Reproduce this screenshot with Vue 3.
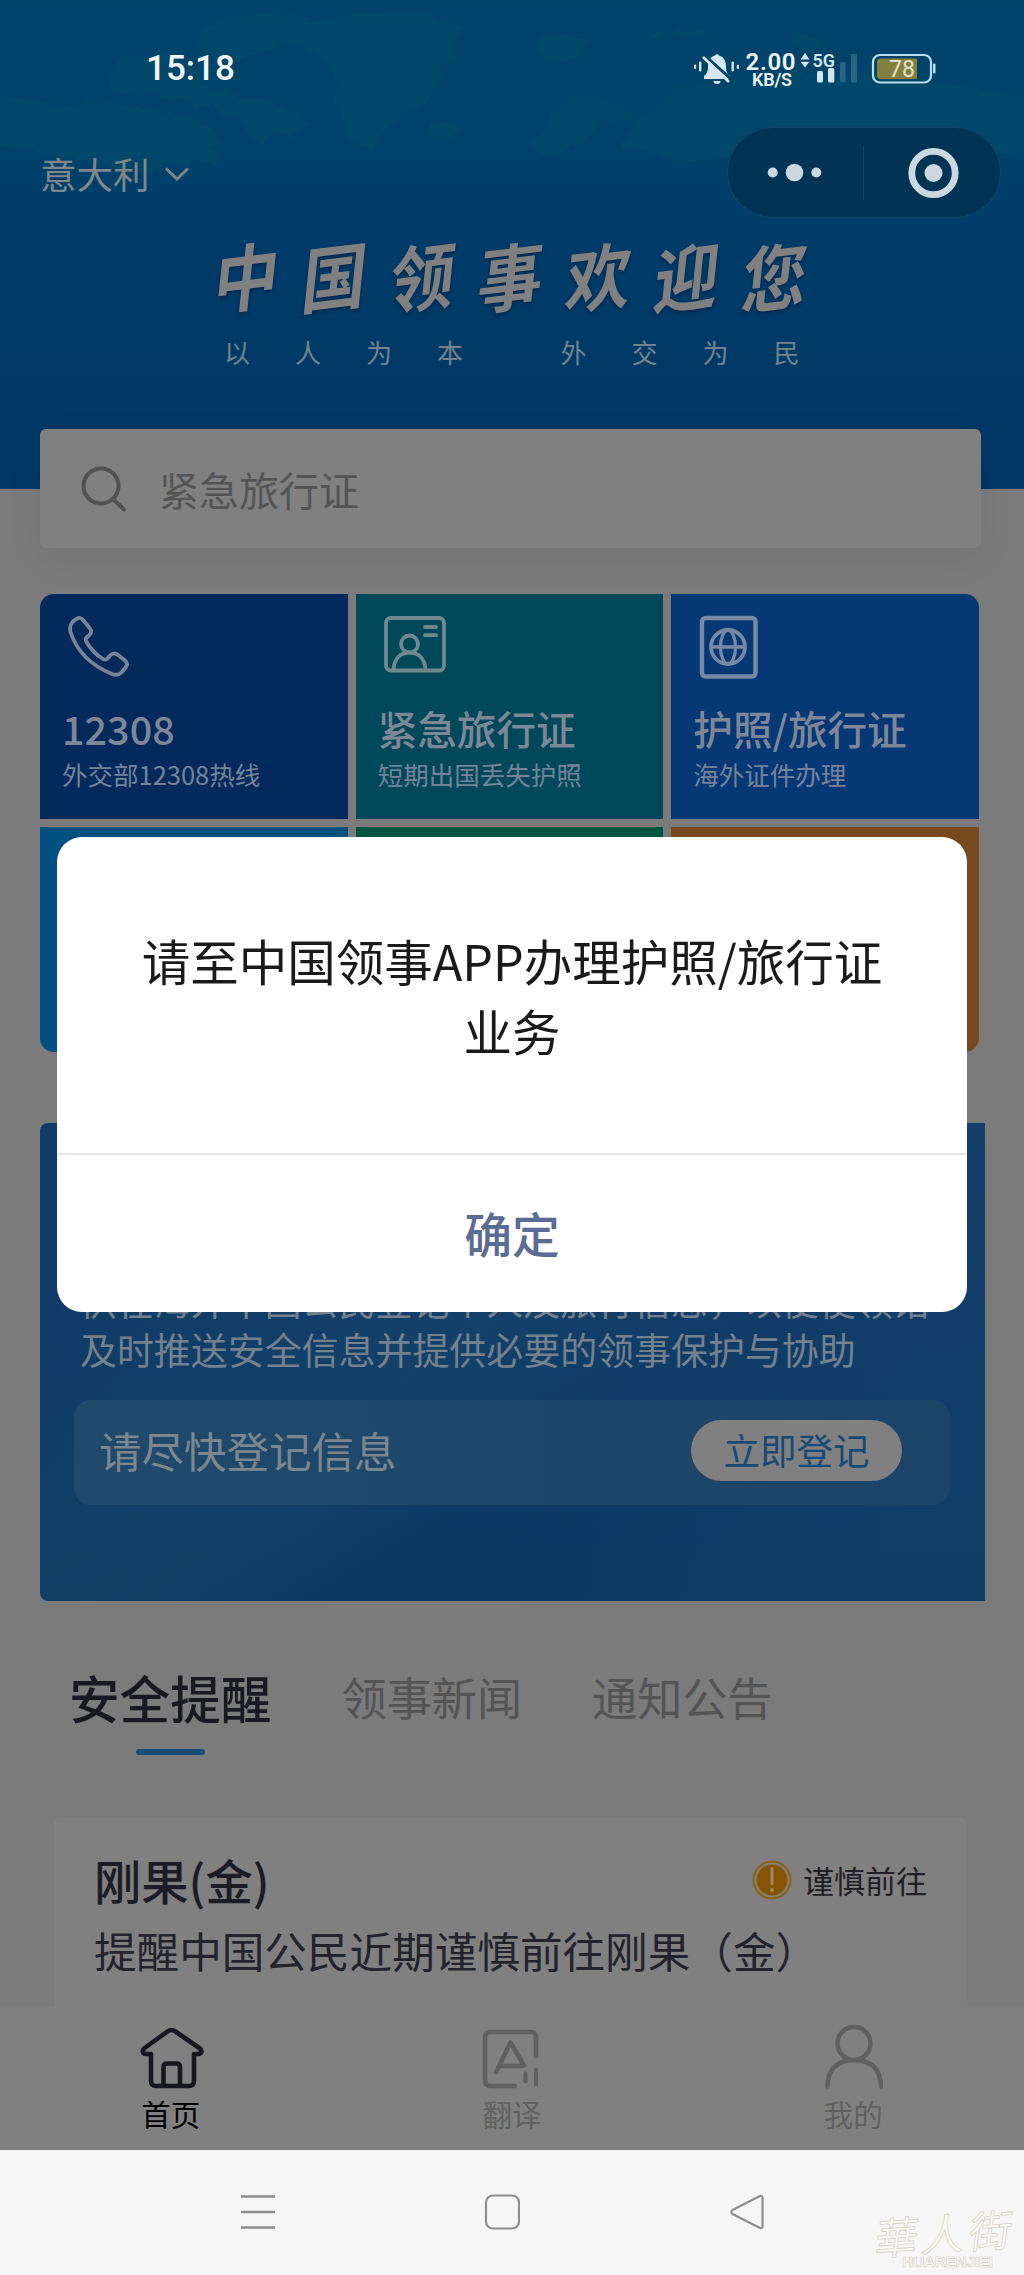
<script setup>
const tiles = [
  { id: 'hotline', title: '12308', sub: '外交部12308热线', color: '#042a5c' },
  { id: 'urgent', title: '紧急旅行证', sub: '短期出国丢失护照', color: '#00485a' },
  { id: 'passport', title: '护照/旅行证', sub: '海外证件办理', color: '#063876' },
  { id: 'd', color: '#005080' },
  { id: 'e', color: '#005540' },
  { id: 'f', color: '#764a1e' },
]
const tabs = ['安全提醒', '领事新闻', '通知公告']
const headline = [...'中国领事欢迎您']
</script>

<template>
  <div class="screen">
    <header class="hero">
      <svg class="map" viewBox="0 0 1024 489" aria-hidden="true">
        <g fill="#006468" opacity=".17" stroke="#006468" stroke-width="3" stroke-dasharray="7 5 3 6">
          <path d="M281 27 L310 23 L330 18 L365 14 L395 13 L425 12 L440 22 L464 27 L452 40 L455 58 L438 66 L442 80 L432 92 L425 104 L408 110 L394 122 L382 132 L374 148 L362 146 L350 136 L342 118 L334 100 L338 84 L330 66 L318 54 L300 46 L282 38 Z" />
          <path d="M205 30 L226 18 L262 14 L306 17 L300 28 L284 36 L272 48 L252 53 L235 62 L216 58 L200 42 Z" />
          <path d="M120 60 L136 54 L150 60 L160 50 L178 52 L176 62 L194 64 L206 74 L198 82 L212 92 L228 90 L240 100 L262 98 L280 108 L300 112 L306 124 L290 136 L276 130 L262 142 L248 132 L240 116 L222 114 L214 104 L196 108 L184 96 L168 100 L156 90 L136 96 L112 90 L110 78 Z" />
          <path d="M0 97 L28 100 L62 108 L92 102 L126 106 L158 112 L190 118 L212 130 L220 142 L206 150 L222 156 L214 164 L196 158 L186 168 L170 160 L150 172 L120 168 L84 160 L58 156 L30 148 L0 146 Z" />
          <path d="M540 38 L566 36 L586 40 L580 52 L566 62 L548 60 L538 48 Z" />
          <path d="M644 34 L664 32 L656 38 Z M676 32 L706 31 L694 38 Z" />
          <path d="M430 126 L446 122 L460 128 L456 134 L442 138 L430 134 Z" />
          <path d="M572 98 L582 94 L602 98 L618 106 L632 116 L612 120 L600 116 L596 130 L582 142 L570 146 L556 156 L540 154 L530 142 L546 130 L552 114 Z" />
          <path d="M640 118 L658 108 L670 96 L678 84 L690 90 L704 84 L724 88 L740 80 L768 82 L796 72 L830 78 L862 74 L900 82 L940 84 L980 90 L1024 100 L1024 150 L980 156 L930 148 L880 160 L820 156 L780 166 L730 158 L680 162 L650 150 L620 148 L630 134 Z" />
          <path d="M792 32 L808 36 L822 46 L810 52 L796 44 Z" />
        </g>
      </svg>

      <div class="status">
        <span class="time">15:18</span>
        <svg class="sysicons" width="250" height="48" viewBox="690 44 250 48" aria-hidden="true">
          <g fill="#d6e6ee">
            <path d="M704 79 V76 C707 74 708 71 708 67 C708 60 711 56.500 715 55.500 A2.200 2.200 0 0 1 719 55.500 C724 57 726 61 726 67 C726 72 727 74 730 76 V79 Z" />
            <path d="M713.500 81 h7 a3.500 3 0 0 1 -7 0 Z" />
            <rect x="699" y="61.500" width="2.400" height="10" rx="1.200" /><rect x="694" y="64.500" width="2.200" height="4.500" rx="1.100" />
            <rect x="731.500" y="61.500" width="2.400" height="10" rx="1.200" /><rect x="736.800" y="64.500" width="2.200" height="4.500" rx="1.100" />
            <path d="M800.500 60.500 L805 54 L809.500 60.500 Z M800.500 62.800 L805 68.500 L809.500 62.800 Z" transform="translate(0 -1)" />
            <rect x="817" y="71" width="6" height="11.500" rx="1.500" /><rect x="828" y="68" width="6.300" height="14.500" rx="1.500" />
          </g>
          <path d="M706 56.500 L732 80" stroke="#00446b" stroke-width="3" /><path d="M703 57 L729 82" stroke="#d6e6ee" stroke-width="2.600" />
          <g fill="#2a6484"><rect x="840" y="62" width="5.500" height="20.500" rx="1.500" /><rect x="851" y="54" width="6" height="28.500" rx="1.500" /></g>
          <text class="s1" x="745.500" y="69.800" textLength="50">2.00</text>
          <text class="s2" x="752" y="86.400" textLength="40">KB/S</text>
          <text class="s3" x="812.500" y="66.800" textLength="22.500" lengthAdjust="spacingAndGlyphs">5G</text>
          <rect x="873" y="55" width="58" height="27.500" rx="7" fill="none" stroke="#bcdcf0" stroke-width="2.200" />
          <rect x="933" y="63.500" width="2.500" height="10" rx="1" fill="#bcdcf0" />
          <path d="M881 58.500 H917 V79 H881 Q877 79 877 75 V62.500 Q877 58.500 881 58.500 Z" fill="#83803d" />
          <text class="s4" x="889" y="76.800" textLength="26">78</text>
        </svg>
      </div>

      <div class="bar">
        <div class="place">
          <span>意大利</span>
          <svg width="26" height="16" viewBox="0 0 26 16"><path d="M2 2.500 L13 13 L24 2.500" fill="none" stroke="#80868a" stroke-width="3" /></svg>
        </div>
        <svg class="capsule" width="274" height="91" viewBox="0 0 274 91">
          <rect x=".5" y=".5" width="273" height="90" rx="45" fill="#003354" stroke="#124668" />
          <path d="M136.500 19 V73" stroke="#174363" stroke-width="1.200" />
          <g fill="#ccd8e0"><circle cx="45.700" cy="45.500" r="5" /><circle cx="67.500" cy="45.500" r="8.800" /><circle cx="89.300" cy="45.500" r="5" /><circle cx="206.500" cy="46" r="9" /></g>
          <circle cx="206.500" cy="46" r="21.700" fill="none" stroke="#ccd8e0" stroke-width="6.800" />
        </svg>
      </div>

      <h1><span v-for="c in headline" :key="c">{{ c }}</span></h1>
      <p class="motto"><span>以人为本</span><span>外交为民</span></p>
    </header>

    <div class="search">
      <svg width="46" height="46" viewBox="0 0 46 46"><circle cx="20" cy="20" r="17.500" fill="none" stroke="#525252" stroke-width="4" /><path d="M32 33 L43 43.500" stroke="#525252" stroke-width="4" stroke-linecap="round" /></svg>
      <span>紧急旅行证</span>
    </div>

    <section class="grid">
      <div v-for="t in tiles" :key="t.id" class="tile" :style="{ background: t.color }">
        <svg v-if="t.id === 'hotline'" class="ico" width="64" height="66" viewBox="66 614 64 66">
          <path d="M72.500 622 L76.500 618.800 Q80 616.500 83 620 L90 628.500 Q92.500 632 89.500 635 L86.500 637.500 Q85 639 86.500 642 Q92.500 652.500 103 659 Q105.500 660.500 107.500 658.500 L110 655.500 Q113.500 652 117.500 654.500 L125 660.500 Q128.500 663.500 126 667 L121.500 672.500 Q118 676 112 674 Q80 661 70.500 632 Q69 626 72.500 622 Z" fill="none" stroke="#7b8496" stroke-width="3.800" stroke-linejoin="round" />
        </svg>
        <svg v-else-if="t.id === 'urgent'" class="ico" width="64" height="66" viewBox="382 614 64 66">
          <g fill="none" stroke="#70898f" stroke-width="3.800">
            <rect x="386" y="618" width="58" height="52.500" rx="5" /><circle cx="409.500" cy="644" r="8.500" />
            <path d="M393.500 670 C394 658 401 652.500 409.500 652.500 S425 658 425.500 670" />
            <path d="M425 627 H436 M425 635.200 H436" stroke-linecap="round" />
          </g>
        </svg>
        <svg v-else-if="t.id === 'passport'" class="ico" width="64" height="66" viewBox="697 615 64 66">
          <g fill="none" stroke="#7789a4" stroke-width="3.800">
            <rect x="702" y="619" width="53.500" height="58.500" rx="3.500" stroke-width="4.400" />
            <circle cx="728" cy="648" r="17" /><ellipse cx="728" cy="648" rx="7.500" ry="17" stroke-width="3.300" /><path d="M711 648 H745" stroke-width="3.300" />
          </g>
        </svg>
        <h2 v-if="t.title">{{ t.title }}</h2>
        <p v-if="t.sub">{{ t.sub }}</p>
      </div>
    </section>

    <section class="register">
      <p class="desc">供在海外中国公民登记个人及旅行信息，以便使领馆<br />及时推送安全信息并提供必要的领事保护与协助</p>
      <div class="panel"><span class="hint">请尽快登记信息</span><span class="pill">立即登记</span></div>
    </section>

    <nav class="tabs"><span v-for="(t, i) in tabs" :key="t" :class="{ on: i === 0 }">{{ t }}</span></nav>

    <article class="news">
      <div class="row">
        <h3>刚果(金)</h3>
        <div class="warn">
          <svg width="42" height="42" viewBox="0 0 42 42"><circle cx="21" cy="21" r="18.500" fill="none" stroke="#90600f" stroke-width="2" /><circle cx="21" cy="21" r="15.500" fill="#855504" /><path d="M21 9.500 V25" stroke="#a08c68" stroke-width="2.800" stroke-linecap="round" /><circle cx="21" cy="31" r="2" fill="#a08c68" /></svg>
          <span>谨慎前往</span>
        </div>
      </div>
      <p>提醒中国公民近期谨慎前往刚果（金）</p>
    </article>

    <footer class="tabbar">
      <div class="tab active">
        <svg width="66" height="66" viewBox="138 2024 66 66"><g fill="none" stroke="#17171f" stroke-width="4.600" stroke-linejoin="round"><path d="M151 2054 H145.500 Q141 2053 144 2048.500 L167.500 2031.500 Q171.500 2028.500 175.500 2031.500 L200 2048.500 Q203.500 2053 198.500 2054 H194 V2081 Q194 2086 189 2086 H156 Q151 2086 151 2081 Z" /><path d="M163.500 2086 V2067 Q163.500 2063.500 167 2063.500 H176.500 Q180 2063.500 180 2067 V2086" /></g></svg>
        <span>首页</span>
      </div>
      <div class="tab">
        <svg width="66" height="66" viewBox="479 2023.500 66 66"><g fill="none" stroke="#606060" stroke-width="4.600" stroke-linecap="round" stroke-linejoin="round"><path d="M536 2056 V2037 Q536 2031.500 530.500 2031.500 H490.500 Q485 2031.500 485 2037 V2080 Q485 2085.500 490.500 2085.500 H515" /><path d="M496 2072 L510.500 2042 L524 2065 M501 2065.500 H523" /><path d="M525.500 2073 V2081 M536 2069 V2084" stroke-width="4" /></g></svg>
        <span>翻译</span>
      </div>
      <div class="tab">
        <svg width="66" height="66" viewBox="821 2022.500 66 66"><g fill="none" stroke="#606060" stroke-width="4.400" stroke-linecap="round"><circle cx="855" cy="2042" r="16.500" /><path d="M828.500 2085 Q829 2059 855 2058.500 Q881.500 2059 882 2085" /></g></svg>
        <span>我的</span>
      </div>
    </footer>

    <div class="sysnav">
      <svg width="36" height="36" viewBox="0 0 36 36"><path d="M1 2.500 H35 M1 18 H35 M1 33.500 H35" stroke="#8e8e8e" stroke-width="2.500" /></svg>
      <svg width="36" height="36" viewBox="0 0 36 36"><rect x="2" y="1.500" width="33" height="33" rx="7" fill="none" stroke="#8e8e8e" stroke-width="2.200" /></svg>
      <svg width="36" height="36" viewBox="-1 0 36 36"><path d="M31 2 Q33.500 1 33.500 4 V32 Q33.500 35 31 34 L3.500 20 Q1 18 3.500 16 Z" fill="none" stroke="#8e8e8e" stroke-width="2.200" /></svg>
    </div>
    <div class="mark"><span class="zh">華人街</span><span class="en">HUARENJIEI</span></div>

    <div class="dialog">
      <div class="msg">请至中国领事APP办理护照/旅行证<br />业务</div>
      <div class="ok">确定</div>
    </div>
  </div>
</template>

<style>
body { background: #7b7b7b; }
</style>
<style scoped>
.screen { position: relative; display: flex; flex-direction: column; width: 1024px; height: 2275px; overflow: hidden; background: #7b7b7b; font-family: "Noto Sans CJK SC", sans-serif; }
h1, h2, h3, p { margin: 0; font-weight: 400; }
svg { display: block; flex: none; }
span, h1, h2, h3 { white-space: nowrap; }
.hero { position: relative; height: 489px; flex: none; background: linear-gradient(#00446a 0, #00426b 150px, #003c6a 240px, #003764 100%); }
.map { position: absolute; left: 0; top: 0; width: 1024px; height: 489px; }
.status, .bar, h1, .motto { position: relative; }
.status { display: flex; justify-content: space-between; padding: 44px 84px 0 146px; height: 83px; box-sizing: content-box; height: 83px; }
.time { margin-top: 4px; font: 500 35px/42px Roboto, sans-serif; color: #f2f6f8; }
.sysicons text { font-family: Roboto, sans-serif; font-weight: 600; fill: #eef4f7; }
.sysicons .s1 { font-size: 24px; }
.sysicons .s2 { font-size: 18px; }
.sysicons .s3 { font-size: 19px; fill: #d6e6ee; }
.sysicons .s4 { font-size: 23px; font-weight: 400; fill: #e4e3cc; }
.bar { display: flex; justify-content: space-between; height: 91px; padding: 0 23px 0 40px; }
.place { display: flex; gap: 14px; align-items: center; color: #80868a; font-size: 36.500px; line-height: 91px; padding-top: 2px; height: 89px; }
h1 { display: flex; gap: 16px; margin: 11px 0 0 211px; height: 95px; line-height: 90px; font-size: 72px; font-weight: 600; color: #808080; text-shadow: 0 2px 4px rgba(0, 20, 50, .5); }
h1 span { width: 72px; transform: skewY(-7deg) skewX(-6deg) scaleX(.9); }
.motto { display: flex; gap: 52.500px; margin: 9px 0 0 224px; font-size: 26px; line-height: 38px; color: #75838c; }
.motto span { letter-spacing: 45px; }
.search { position: relative; display: flex; align-items: center; flex: none; box-sizing: border-box; width: 941px; height: 119px; margin: -60px 0 0 40px; padding-left: 41px; gap: 32px; background: #808080; border-radius: 6px; box-shadow: 0 12px 40px rgba(0, 0, 0, .05); color: #545454; font-size: 40px; line-height: 60px; }
.grid { display: grid; grid-template-columns: repeat(3, 1fr); gap: 8px; width: 939px; margin: 46px 0 0 40px; border-radius: 14px; overflow: hidden; flex: none; }
.tile { height: 225px; padding-left: 22px; box-sizing: border-box; display: flex; flex-direction: column; }
.ico { margin: 20px 0 0 4px; }
.tile h2 { margin-top: 19px; height: 58px; line-height: 58px; font-size: 39.600px; font-weight: 500; color: #7d8797; }
.tile p { margin-top: -1px; font-size: 25.500px; line-height: 36px; color: #75839a; white-space: nowrap; }
.register { width: 945px; height: 478px; margin: 71px 0 0 40px; flex: none; border-radius: 8px 0 0 8px; overflow: hidden; box-sizing: border-box; padding: 153px 0 0 34px; background: linear-gradient(125deg, transparent 55%, rgba(30, 80, 120, .18) 90%), linear-gradient(145deg, transparent 15%, rgba(30, 80, 115, .3) 45%, transparent 62%), linear-gradient(#123c68, #0b3962); }
.desc { padding-left: 6px; font-size: 36.950px; line-height: 49px; color: #73818d; white-space: nowrap; height: 98px; }
.panel { display: flex; align-items: center; justify-content: space-between; width: 876px; height: 105px; margin-top: 26px; padding: 0 48px 0 25px; box-sizing: border-box; border-radius: 17px; background: linear-gradient(90deg, #204a6c, #1c4467); }
.hint { margin-top: -5px; font-size: 42.500px; line-height: 60px; color: #7b868f; }
.pill { width: 211px; height: 61px; margin-top: -4px; border-radius: 31px; background: #808080; color: #174a76; font-size: 36.500px; line-height: 59px; text-align: center; }
.tabs { display: flex; align-items: flex-start; flex: none; height: 155px; margin: 61px 0 0 69px; }
.tabs span { width: 180px; margin-right: 70.500px; font-size: 45.200px; line-height: 70px; color: #545454; }
.tabs .on { position: relative; width: 202px; font-size: 50.600px; font-weight: 500; color: #191921; }
.tabs .on::after { content: ""; position: absolute; left: 67px; top: 87px; width: 69px; height: 6px; border-radius: 3px; background: #184d7c; }
.news { width: 913px; height: 190px; margin-left: 54px; flex: none; background: #808080; border-radius: 6px 6px 0 0; padding: 28px 40px 0 40px; box-sizing: border-box; color: #1c1c24; }
.row { display: flex; justify-content: space-between; height: 70px; align-items: center; }
h3 { font-size: 47.300px; font-weight: 500; line-height: 70px; }
.warn { display: flex; gap: 10px; align-items: center; font-size: 31px; line-height: 60px; color: #202026; }
.news p { font-size: 42.600px; line-height: 70px; white-space: nowrap; color: #23232b; }
.tabbar { display: flex; justify-content: space-around; flex: none; height: 143px; background: #808080; box-sizing: border-box; padding-top: 17px; }
.tab { display: flex; flex-direction: column; align-items: center; width: 341px; font-size: 29.500px; line-height: 44px; color: #606060; }
.tab span { margin-top: 1px; }
.active { color: #000; }
.sysnav { display: flex; gap: 208px; height: 125px; flex: none; padding: 44px 0 0 240px; box-sizing: border-box; background: #f6f6f6; }
.mark { position: absolute; right: 5px; bottom: 5px; display: flex; flex-direction: column; width: 143px; color: #fbfaf6; }
.mark .zh { font-size: 43px; line-height: 46px; letter-spacing: 4px; font-weight: 400; transform: skewY(-4deg) skewX(-8deg); -webkit-text-stroke: .8px #d9d5c9; }
.mark .en { margin-left: 26px; font: 700 15.500px/16px "Liberation Sans", sans-serif; letter-spacing: -.3px; -webkit-text-stroke: .6px #d3cec1; }
.dialog { position: absolute; left: 57px; top: 837px; width: 910px; height: 475px; border-radius: 25px; background: #fff; display: flex; flex-direction: column; text-align: center; }
.msg { box-sizing: border-box; height: 318px; padding-top: 88px; border-bottom: 2px solid #e6e6e6; font-size: 48.500px; line-height: 70px; color: #1a1a1a; }
.ok { flex: 1; font-size: 47.800px; font-weight: 500; line-height: 155px; color: #5a6c95; }
</style>
